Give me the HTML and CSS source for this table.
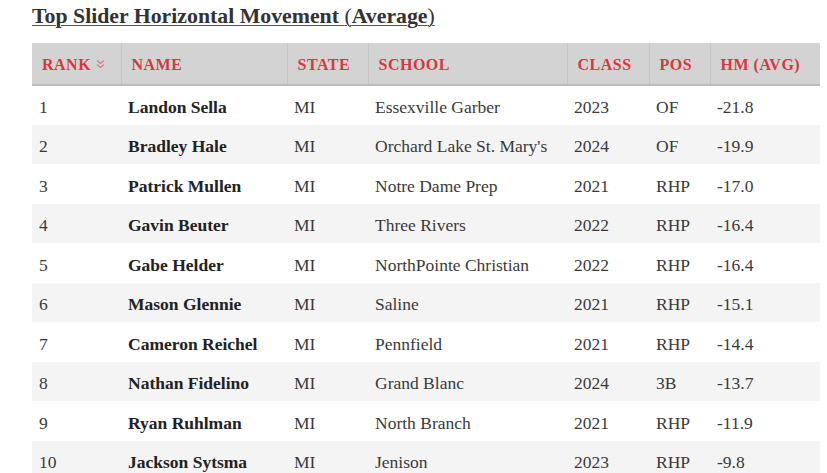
FILE: index.html
```html
<!DOCTYPE html>
<html>
<head>
<meta charset="utf-8">
<link rel="stylesheet" href="styles.css">
</head>
<body>
<div class="page">
  <h2 class="title"><a href="#">Top Slider Horizontal Movement <span class="paren">(</span>Average<span class="paren">)</span></a></h2>
  <table class="board">
    <colgroup>
      <col class="c-rank"><col class="c-name"><col class="c-state"><col class="c-school"><col class="c-class"><col class="c-pos"><col class="c-hm">
    </colgroup>
    <thead>
      <tr>
        <th>RANK <svg class="sort" width="9" height="10" viewBox="0 0 9 10"><path d="M1 1.5 L4.5 4.5 L8 1.5 M1 5.5 L4.5 8.5 L8 5.5" fill="none" stroke="#e2797f" stroke-width="1.3"/></svg></th>
        <th>NAME</th>
        <th>STATE</th>
        <th>SCHOOL</th>
        <th>CLASS</th>
        <th>POS</th>
        <th>HM (AVG)</th>
      </tr>
    </thead>
    <tbody>
      <tr><td>1</td><td class="name">Landon Sella</td><td>MI</td><td>Essexville Garber</td><td>2023</td><td>OF</td><td>-21.8</td></tr>
      <tr><td>2</td><td class="name">Bradley Hale</td><td>MI</td><td>Orchard Lake St. Mary's</td><td>2024</td><td>OF</td><td>-19.9</td></tr>
      <tr><td>3</td><td class="name">Patrick Mullen</td><td>MI</td><td>Notre Dame Prep</td><td>2021</td><td>RHP</td><td>-17.0</td></tr>
      <tr><td>4</td><td class="name">Gavin Beuter</td><td>MI</td><td>Three Rivers</td><td>2022</td><td>RHP</td><td>-16.4</td></tr>
      <tr><td>5</td><td class="name">Gabe Helder</td><td>MI</td><td>NorthPointe Christian</td><td>2022</td><td>RHP</td><td>-16.4</td></tr>
      <tr><td>6</td><td class="name">Mason Glennie</td><td>MI</td><td>Saline</td><td>2021</td><td>RHP</td><td>-15.1</td></tr>
      <tr><td>7</td><td class="name">Cameron Reichel</td><td>MI</td><td>Pennfield</td><td>2021</td><td>RHP</td><td>-14.4</td></tr>
      <tr><td>8</td><td class="name">Nathan Fidelino</td><td>MI</td><td>Grand Blanc</td><td>2024</td><td>3B</td><td>-13.7</td></tr>
      <tr><td>9</td><td class="name">Ryan Ruhlman</td><td>MI</td><td>North Branch</td><td>2021</td><td>RHP</td><td>-11.9</td></tr>
      <tr><td>10</td><td class="name">Jackson Sytsma</td><td>MI</td><td>Jenison</td><td>2023</td><td>RHP</td><td>-9.8</td></tr>
    </tbody>
  </table>
</div>
</body>
</html>
```

FILE: styles.css
```css
html, body {
  margin: 0;
  padding: 0;
  background: #ffffff;
}
body {
  font-family: "Liberation Serif", "Times New Roman", serif;
  color: #3a3a3a;
}
.page {
  padding: 3px 0 0 32px;
}
.title {
  margin: 0;
  font-size: 21.8px;
  line-height: 26px;
  font-weight: bold;
}
.title a {
  color: #333333;
  text-decoration: underline;
  text-decoration-color: #555555;
  text-decoration-thickness: 1px;
  text-underline-offset: 2px;
}
.title .paren {
  font-weight: normal;
}
.board {
  margin-top: 14px;
  width: 788px;
  border-collapse: collapse;
  table-layout: fixed;
}
.c-rank { width: 89px; }
.c-name { width: 166px; }
.c-state { width: 81px; }
.c-school { width: 199px; }
.c-class { width: 82px; }
.c-pos { width: 61px; }
.c-hm { width: 110px; }
.board th {
  background: #d3d3d3;
  color: #d7373f;
  font-size: 16px;
  letter-spacing: 0.5px;
  font-weight: bold;
  text-align: left;
  height: 42px;
  padding: 3px 0 0 10px;
  box-sizing: border-box;
  border-right: 1px solid #c5c5c5;
  border-bottom: 2px solid #bcbcbc;
  white-space: nowrap;
}
.board th:last-child {
  border-right: none;
}
.sort {
  vertical-align: 1px;
}
.board td {
  height: 39.5px;
  padding: 5px 0 0 7px;
  box-sizing: border-box;
  font-size: 17.5px;
  white-space: nowrap;
}
.board tbody tr:nth-child(even) td {
  background: #f4f4f4;
}
.board td.name {
  font-weight: bold;
  color: #222222;
}
```
